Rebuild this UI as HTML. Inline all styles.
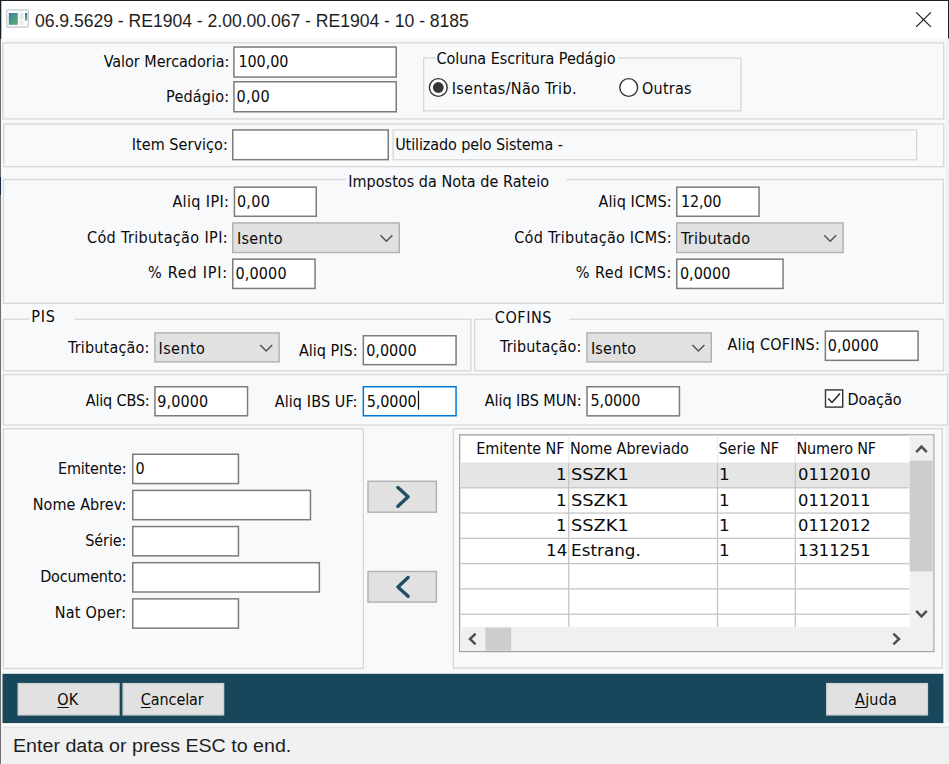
<!DOCTYPE html><html lang="pt-BR"><head><meta charset="utf-8"><title>RE1904</title><style>html,body{margin:0;padding:0}
body{width:949px;height:764px;position:relative;overflow:hidden;background:#f1f1f1}
#w{position:absolute;left:0;top:0;width:949px;height:764px;overflow:hidden}
#w>svg{position:absolute;left:0;top:0}
#w .t{position:absolute;white-space:nowrap;line-height:24px;height:24px}
#w .t i{display:inline-block;width:0;height:0}
u{text-decoration:underline;text-underline-offset:1.5px;text-decoration-thickness:1px}</style></head><body><div id="w">
<svg width="949" height="764" viewBox="0 0 949 764">
<rect x="0" y="0" width="949" height="764" fill="#f1f1f1"/>
<rect x="1" y="1" width="947" height="37.7" fill="#fff"/>
<rect x="2" y="38.7" width="944" height="688.3" fill="#f8f9fb"/>
<rect x="0" y="0" width="949" height="1" fill="#16202a"/>
<rect x="0" y="0" width="1.2" height="764" fill="#6e6e6e"/>
<rect x="0" y="0" width="1.2" height="39" fill="#16202a"/>
<rect x="0" y="177" width="1.2" height="18" fill="#1c2c44"/>
<rect x="1.2" y="38.7" width="0.8" height="725.3" fill="#fdfdfd"/>
<rect x="948" y="0" width="1" height="38.5" fill="#16202a"/>
<rect x="2.85" y="42.85" width="940.9" height="76.1" fill="#f8f9fb" stroke="#d6d7d9" stroke-width="1.3"/>
<rect x="233.95" y="47.05" width="162.3" height="30" fill="#fff" stroke="#7c7c7c" stroke-width="1.5"/>
<rect x="233.95" y="81.75" width="162.3" height="30" fill="#fff" stroke="#7c7c7c" stroke-width="1.5"/>
<rect x="423.65" y="58.05" width="317.3" height="52.8" fill="#f8f9fb" stroke="#d6d7d9" stroke-width="1.3"/>
<rect x="435.6" y="56.9" width="182.9" height="2.3" fill="#f8f9fb"/>
<circle cx="438.3" cy="87.5" r="8.9" fill="#fff" stroke="#333" stroke-width="1.4"/>
<circle cx="438.3" cy="87.5" r="5.4" fill="#353535"/>
<circle cx="628.7" cy="87.5" r="8.9" fill="#fff" stroke="#333" stroke-width="1.4"/>
<rect x="3.75" y="124.05" width="940" height="42.6" fill="#f8f9fb" stroke="#d6d7d9" stroke-width="1.3"/>
<rect x="232.75" y="129.95" width="155.5" height="29.7" fill="#fff" stroke="#7c7c7c" stroke-width="1.5"/>
<rect x="393.15" y="129.95" width="523.5" height="29.8" fill="#f8f9fb" stroke="#d6d7d9" stroke-width="1.3"/>
<rect x="3.45" y="179.45" width="939.9" height="123.9" fill="#f8f9fb" stroke="#d6d7d9" stroke-width="1.3"/>
<rect x="346.5" y="178.3" width="220" height="2.3" fill="#f8f9fb"/>
<rect x="234.45" y="187.15" width="81.8" height="29.1" fill="#fff" stroke="#7c7c7c" stroke-width="1.5"/>
<rect x="232.7" y="222.9" width="166.6" height="29.6" fill="#e1e1e1" stroke="#b0b0b0" stroke-width="1.4"/>
<path d="M380.4 235.2 L386.4 241.2 L392.4 235.2" fill="none" stroke="#525252" stroke-width="1.45" />
<rect x="232.75" y="259.15" width="82.3" height="29.3" fill="#fff" stroke="#7c7c7c" stroke-width="1.5"/>
<rect x="676.75" y="187.15" width="82.3" height="29.1" fill="#fff" stroke="#7c7c7c" stroke-width="1.5"/>
<rect x="676.7" y="222.9" width="166.4" height="29.6" fill="#e1e1e1" stroke="#b0b0b0" stroke-width="1.4"/>
<path d="M824.2 235.2 L830.2 241.2 L836.2 235.2" fill="none" stroke="#525252" stroke-width="1.45" />
<rect x="676.75" y="259.15" width="106.3" height="29.3" fill="#fff" stroke="#7c7c7c" stroke-width="1.5"/>
<rect x="3.45" y="319.25" width="467.4" height="51.5" fill="#f8f9fb" stroke="#d6d7d9" stroke-width="1.3"/>
<rect x="29" y="318.1" width="45.6" height="2.3" fill="#f8f9fb"/>
<rect x="474.65" y="319.25" width="468.9" height="51.5" fill="#f8f9fb" stroke="#d6d7d9" stroke-width="1.3"/>
<rect x="493" y="318.1" width="76.3" height="2.3" fill="#f8f9fb"/>
<rect x="154.9" y="332.9" width="124.2" height="29" fill="#e1e1e1" stroke="#b0b0b0" stroke-width="1.4"/>
<path d="M260.2 344.9 L266.2 350.9 L272.2 344.9" fill="none" stroke="#525252" stroke-width="1.45" />
<rect x="363.35" y="335.75" width="92.7" height="28.9" fill="#fff" stroke="#7c7c7c" stroke-width="1.5"/>
<rect x="587" y="332.9" width="124.3" height="29" fill="#e1e1e1" stroke="#b0b0b0" stroke-width="1.4"/>
<path d="M692.4 344.9 L698.4 350.9 L704.4 344.9" fill="none" stroke="#525252" stroke-width="1.45" />
<rect x="825.35" y="331.15" width="92.7" height="29.2" fill="#fff" stroke="#7c7c7c" stroke-width="1.5"/>
<rect x="3.45" y="374.55" width="944.1" height="50.5" fill="#f8f9fb" stroke="#d6d7d9" stroke-width="1.3"/>
<rect x="154.95" y="386.75" width="92.6" height="29" fill="#fff" stroke="#7c7c7c" stroke-width="1.5"/>
<rect x="363.35" y="386.75" width="92.7" height="29" fill="#fff" stroke="#0078d7" stroke-width="1.5"/>
<rect x="587.05" y="386.75" width="92.4" height="29.1" fill="#fff" stroke="#7c7c7c" stroke-width="1.5"/>
<rect x="417.9" y="390.8" width="1.2" height="18.8" fill="#111"/>
<rect x="825.5" y="389.9" width="17.2" height="17.2" fill="#fff" stroke="#333" stroke-width="1.4"/>
<path d="M828.3 398.6 L832 402.4 L840 393.6" fill="none" stroke="#222" stroke-width="1.5" />
<rect x="3.45" y="428.75" width="359.9" height="239.7" fill="#f8f9fb" stroke="#d6d7d9" stroke-width="1.3"/>
<rect x="132.75" y="454.25" width="105.7" height="29.3" fill="#fff" stroke="#7c7c7c" stroke-width="1.5"/>
<rect x="132.75" y="490.4" width="177.7" height="29.3" fill="#fff" stroke="#7c7c7c" stroke-width="1.5"/>
<rect x="132.75" y="526.55" width="105.7" height="29.3" fill="#fff" stroke="#7c7c7c" stroke-width="1.5"/>
<rect x="132.75" y="562.7" width="186.6" height="29.3" fill="#fff" stroke="#7c7c7c" stroke-width="1.5"/>
<rect x="132.75" y="598.85" width="105.7" height="29.3" fill="#fff" stroke="#7c7c7c" stroke-width="1.5"/>
<rect x="368" y="481.3" width="68.4" height="30.9" fill="#e1e1e1" stroke="#b0b0b0" stroke-width="1.4"/>
<path d="M397.9 487.45 L408.1 496.85 L397.9 506.25" fill="none" stroke="#1f4f64" stroke-width="3.4" stroke-linecap="round" stroke-linejoin="round"/>
<rect x="368" y="571.5" width="68.4" height="30.6" fill="#e1e1e1" stroke="#b0b0b0" stroke-width="1.4"/>
<path d="M408.1 577.5 L397.9 586.9 L408.1 596.3" fill="none" stroke="#1f4f64" stroke-width="3.4" stroke-linecap="round" stroke-linejoin="round"/>
<rect x="453.35" y="428.75" width="488.9" height="239.4" fill="#f8f9fb" stroke="#d6d7d9" stroke-width="1.3"/>
<rect x="459.65" y="434.85" width="474.2" height="216.7" fill="#fff" stroke="#a2a2a2" stroke-width="1.3"/>
<rect x="460.3" y="462.5" width="449.4" height="25.28" fill="#e5e5e5"/>
<rect x="460.3" y="487.13" width="449.4" height="1.3" fill="#c6c6c6"/>
<rect x="460.3" y="512.41" width="449.4" height="1.3" fill="#c6c6c6"/>
<rect x="460.3" y="537.69" width="449.4" height="1.3" fill="#c6c6c6"/>
<rect x="460.3" y="562.97" width="449.4" height="1.3" fill="#c6c6c6"/>
<rect x="460.3" y="588.25" width="449.4" height="1.3" fill="#c6c6c6"/>
<rect x="460.3" y="613.53" width="449.4" height="1.3" fill="#c6c6c6"/>
<rect x="568.05" y="462.5" width="1.3" height="164.3" fill="#c6c6c6"/>
<rect x="568.05" y="435.5" width="1.3" height="27" fill="#eeeeee"/>
<rect x="716.85" y="462.5" width="1.3" height="164.3" fill="#c6c6c6"/>
<rect x="716.85" y="435.5" width="1.3" height="27" fill="#eeeeee"/>
<rect x="794.65" y="462.5" width="1.3" height="164.3" fill="#c6c6c6"/>
<rect x="794.65" y="435.5" width="1.3" height="27" fill="#eeeeee"/>
<rect x="909.7" y="435.5" width="23.5" height="191.3" fill="#f0f0f0"/>
<rect x="909.7" y="460.6" width="22.9" height="110.8" fill="#cdcdcd"/>
<path d="M916.2 452.2 L921.5 446.6 L926.8 452.2" fill="none" stroke="#505050" stroke-width="2.5" />
<path d="M916.2 610.8 L921.5 616.4 L926.8 610.8" fill="none" stroke="#505050" stroke-width="2.5" />
<rect x="460.3" y="626.8" width="472.9" height="24.1" fill="#f0f0f0"/>
<rect x="485.4" y="627.6" width="25.8" height="23" fill="#cdcdcd"/>
<path d="M475.6 633.6 L470 639 L475.6 644.4" fill="none" stroke="#505050" stroke-width="2.5" />
<path d="M893.4 633.6 L899 639 L893.4 644.4" fill="none" stroke="#505050" stroke-width="2.5" />
<rect x="2.5" y="673.8" width="940.9" height="49.5" fill="#18475b"/>
<rect x="2" y="723.3" width="947" height="3.4" fill="#fbfbfb"/>
<rect x="2" y="726.7" width="947" height="1.1" fill="#dedede"/>
<rect x="2" y="727.8" width="947" height="36.2" fill="#f1f1f1"/>
<rect x="18.15" y="683.55" width="100.9" height="31.4" fill="#e1e1e1" stroke="#d0d0d0" stroke-width="1.3"/>
<rect x="123.05" y="683.55" width="100.6" height="31.4" fill="#e1e1e1" stroke="#d0d0d0" stroke-width="1.3"/>
<rect x="826.75" y="683.55" width="100.7" height="31.4" fill="#e1e1e1" stroke="#d0d0d0" stroke-width="1.3"/>
<defs><linearGradient id="g1" x1="0" y1="0" x2="1" y2="1"><stop offset="0" stop-color="#3f78a8"/><stop offset="0.5" stop-color="#4c9a86"/><stop offset="1" stop-color="#5fae6a"/></linearGradient>
<linearGradient id="g2" x1="0" y1="0" x2="0" y2="1"><stop offset="0" stop-color="#3f6fae"/><stop offset="1" stop-color="#6bb56a"/></linearGradient></defs>
<rect x="6.7" y="9.8" width="21.6" height="17.4" rx="1.6" fill="#fbfcfd" stroke="#c3c8ce" stroke-width="1.2"/>
<rect x="8.8" y="13" width="9" height="11.8" fill="url(#g1)"/>
<rect x="19.6" y="13" width="3.8" height="6.6" fill="#e6e8ea"/>
<rect x="19.6" y="21.2" width="3.8" height="3.5" fill="#e9ebec"/>
<rect x="25" y="13" width="2.2" height="7.5" fill="url(#g2)"/>
<path d="M916.2 12.4 L930.9 26.9 M930.9 12.4 L916.2 26.9" fill="none" stroke="#111" stroke-width="1.1" />
</svg>
<div class="t" style='left:34.90px;top:8.90px;font:17.6px "Liberation Sans",sans-serif;line-height:24px;color:#1e1e1e;letter-spacing:-0.024px'>06.9.5629 - RE1904 - 2.00.00.067 - RE1904 - 10 - 8185</div>
<div class="t" style='left:103.70px;top:50.00px;font:16px "DejaVu Sans Condensed","Liberation Sans",sans-serif;line-height:24px;color:#0a0a0a;letter-spacing:-0.013px'>Valor Mercadoria:</div>
<div class="t" style='left:166.10px;top:84.70px;font:16px "DejaVu Sans Condensed","Liberation Sans",sans-serif;line-height:24px;color:#0a0a0a;letter-spacing:0.183px'>Pedágio:</div>
<div class="t" style='left:238.40px;top:50.40px;font:16px "DejaVu Sans Condensed","Liberation Sans",sans-serif;line-height:24px;color:#0a0a0a;letter-spacing:-0.060px'>100,00</div>
<div class="t" style='left:236.60px;top:85.10px;font:16px "DejaVu Sans Condensed","Liberation Sans",sans-serif;line-height:24px;color:#0a0a0a;letter-spacing:0.313px'>0,00</div>
<div class="t" style='left:436.40px;top:47.20px;font:16px "DejaVu Sans Condensed","Liberation Sans",sans-serif;line-height:24px;color:#0a0a0a;letter-spacing:-0.032px'>Coluna Escritura Pedágio</div>
<div class="t" style='left:451.70px;top:76.70px;font:16px "DejaVu Sans Condensed","Liberation Sans",sans-serif;line-height:24px;color:#0a0a0a;letter-spacing:0.326px'>Isentas/Não Trib.</div>
<div class="t" style='left:642.00px;top:76.70px;font:16px "DejaVu Sans Condensed","Liberation Sans",sans-serif;line-height:24px;color:#0a0a0a;letter-spacing:0.229px'>Outras</div>
<div class="t" style='left:131.70px;top:133.10px;font:16px "DejaVu Sans Condensed","Liberation Sans",sans-serif;line-height:24px;color:#0a0a0a;letter-spacing:0.066px'>Item Serviço:</div>
<div class="t" style='left:395.20px;top:133.30px;font:16px "DejaVu Sans Condensed","Liberation Sans",sans-serif;line-height:24px;color:#0a0a0a;letter-spacing:-0.108px'>Utilizado pelo Sistema -</div>
<div class="t" style='left:348.20px;top:170.30px;font:16px "DejaVu Sans Condensed","Liberation Sans",sans-serif;line-height:24px;color:#0a0a0a;letter-spacing:0.046px'>Impostos da Nota de Rateio</div>
<div class="t" style='left:172.40px;top:189.80px;font:16px "DejaVu Sans Condensed","Liberation Sans",sans-serif;line-height:24px;color:#0a0a0a;letter-spacing:0.369px'>Aliq IPI:</div>
<div class="t" style='left:236.90px;top:190.30px;font:16px "DejaVu Sans Condensed","Liberation Sans",sans-serif;line-height:24px;color:#0a0a0a;letter-spacing:0.313px'>0,00</div>
<div class="t" style='left:87.00px;top:225.70px;font:16px "DejaVu Sans Condensed","Liberation Sans",sans-serif;line-height:24px;color:#0a0a0a;letter-spacing:0.380px'>Cód Tributação IPI:</div>
<div class="t" style='left:236.90px;top:227.00px;font:16px "DejaVu Sans Condensed","Liberation Sans",sans-serif;line-height:24px;color:#0a0a0a;letter-spacing:0.305px'>Isento</div>
<div class="t" style='left:147.90px;top:261.40px;font:16px "DejaVu Sans Condensed","Liberation Sans",sans-serif;line-height:24px;color:#0a0a0a;letter-spacing:0.798px'>% Red IPI:</div>
<div class="t" style='left:235.60px;top:261.90px;font:16px "DejaVu Sans Condensed","Liberation Sans",sans-serif;line-height:24px;color:#0a0a0a;letter-spacing:0.123px'>0,0000</div>
<div class="t" style='left:598.50px;top:189.80px;font:16px "DejaVu Sans Condensed","Liberation Sans",sans-serif;line-height:24px;color:#0a0a0a;letter-spacing:0.103px'>Aliq ICMS:</div>
<div class="t" style='left:681.10px;top:190.20px;font:16px "DejaVu Sans Condensed","Liberation Sans",sans-serif;line-height:24px;color:#0a0a0a;letter-spacing:-0.201px'>12,00</div>
<div class="t" style='left:514.30px;top:225.70px;font:16px "DejaVu Sans Condensed","Liberation Sans",sans-serif;line-height:24px;color:#0a0a0a;letter-spacing:0.252px'>Cód Tributação ICMS:</div>
<div class="t" style='left:681.10px;top:226.70px;font:16px "DejaVu Sans Condensed","Liberation Sans",sans-serif;line-height:24px;color:#0a0a0a;letter-spacing:0.230px'>Tributado</div>
<div class="t" style='left:575.80px;top:261.40px;font:16px "DejaVu Sans Condensed","Liberation Sans",sans-serif;line-height:24px;color:#0a0a0a;letter-spacing:0.472px'>% Red ICMS:</div>
<div class="t" style='left:679.90px;top:262.00px;font:16px "DejaVu Sans Condensed","Liberation Sans",sans-serif;line-height:24px;color:#0a0a0a;letter-spacing:0.023px'>0,0000</div>
<div class="t" style='left:31.30px;top:305.00px;font:16px "DejaVu Sans Condensed","Liberation Sans",sans-serif;line-height:24px;color:#0a0a0a;letter-spacing:0.712px'>PIS</div>
<div class="t" style='left:68.00px;top:335.70px;font:16px "DejaVu Sans Condensed","Liberation Sans",sans-serif;line-height:24px;color:#0a0a0a;letter-spacing:0.194px'>Tributação:</div>
<div class="t" style='left:158.50px;top:336.70px;font:16px "DejaVu Sans Condensed","Liberation Sans",sans-serif;line-height:24px;color:#0a0a0a;letter-spacing:0.438px'>Isento</div>
<div class="t" style='left:298.90px;top:338.50px;font:16px "DejaVu Sans Condensed","Liberation Sans",sans-serif;line-height:24px;color:#0a0a0a;letter-spacing:0.026px'>Aliq PIS:</div>
<div class="t" style='left:366.20px;top:338.70px;font:16px "DejaVu Sans Condensed","Liberation Sans",sans-serif;line-height:24px;color:#0a0a0a;letter-spacing:0.007px'>0,0000</div>
<div class="t" style='left:494.80px;top:305.50px;font:16px "DejaVu Sans Condensed","Liberation Sans",sans-serif;line-height:24px;color:#0a0a0a;letter-spacing:0.581px'>COFINS</div>
<div class="t" style='left:500.00px;top:335.30px;font:16px "DejaVu Sans Condensed","Liberation Sans",sans-serif;line-height:24px;color:#0a0a0a;letter-spacing:0.194px'>Tributação:</div>
<div class="t" style='left:590.90px;top:336.50px;font:16px "DejaVu Sans Condensed","Liberation Sans",sans-serif;line-height:24px;color:#0a0a0a;letter-spacing:0.221px'>Isento</div>
<div class="t" style='left:727.40px;top:333.40px;font:16px "DejaVu Sans Condensed","Liberation Sans",sans-serif;line-height:24px;color:#0a0a0a;letter-spacing:0.198px'>Aliq COFINS:</div>
<div class="t" style='left:827.80px;top:334.00px;font:16px "DejaVu Sans Condensed","Liberation Sans",sans-serif;line-height:24px;color:#0a0a0a;letter-spacing:0.090px'>0,0000</div>
<div class="t" style='left:85.70px;top:389.30px;font:16px "DejaVu Sans Condensed","Liberation Sans",sans-serif;line-height:24px;color:#0a0a0a;letter-spacing:-0.145px'>Aliq CBS:</div>
<div class="t" style='left:157.20px;top:389.50px;font:16px "DejaVu Sans Condensed","Liberation Sans",sans-serif;line-height:24px;color:#0a0a0a;letter-spacing:0.123px'>9,0000</div>
<div class="t" style='left:274.70px;top:389.50px;font:16px "DejaVu Sans Condensed","Liberation Sans",sans-serif;line-height:24px;color:#0a0a0a;letter-spacing:0.114px'>Aliq IBS UF:</div>
<div class="t" style='left:366.70px;top:389.50px;font:16px "DejaVu Sans Condensed","Liberation Sans",sans-serif;line-height:24px;color:#0a0a0a;letter-spacing:-0.077px'>5,0000</div>
<div class="t" style='left:484.80px;top:389.00px;font:16px "DejaVu Sans Condensed","Liberation Sans",sans-serif;line-height:24px;color:#0a0a0a;letter-spacing:-0.068px'>Aliq IBS MUN:</div>
<div class="t" style='left:590.40px;top:389.30px;font:16px "DejaVu Sans Condensed","Liberation Sans",sans-serif;line-height:24px;color:#0a0a0a;letter-spacing:-0.077px'>5,0000</div>
<div class="t" style='left:847.50px;top:388.00px;font:16px "DejaVu Sans Condensed","Liberation Sans",sans-serif;line-height:24px;color:#0a0a0a;letter-spacing:-0.058px'>Doação</div>
<div class="t" style='left:58.10px;top:456.90px;font:16px "DejaVu Sans Condensed","Liberation Sans",sans-serif;line-height:24px;color:#0a0a0a;letter-spacing:-0.199px'>Emitente:</div>
<div class="t" style='left:135.42px;top:457.00px;font:16px "DejaVu Sans Condensed","Liberation Sans",sans-serif;line-height:24px;color:#0a0a0a'>0</div>
<div class="t" style='left:32.80px;top:492.80px;font:16px "DejaVu Sans Condensed","Liberation Sans",sans-serif;line-height:24px;color:#0a0a0a;letter-spacing:0.062px'>Nome Abrev:</div>
<div class="t" style='left:85.20px;top:528.70px;font:16px "DejaVu Sans Condensed","Liberation Sans",sans-serif;line-height:24px;color:#0a0a0a;letter-spacing:-0.071px'>Série:</div>
<div class="t" style='left:40.20px;top:565.20px;font:16px "DejaVu Sans Condensed","Liberation Sans",sans-serif;line-height:24px;color:#0a0a0a;letter-spacing:-0.203px'>Documento:</div>
<div class="t" style='left:54.80px;top:600.90px;font:16px "DejaVu Sans Condensed","Liberation Sans",sans-serif;line-height:24px;color:#0a0a0a;letter-spacing:0.221px'>Nat Oper:</div>
<div class="t" style='left:476.30px;top:437.00px;font:16px "DejaVu Sans Condensed","Liberation Sans",sans-serif;line-height:24px;color:#0a0a0a;letter-spacing:-0.060px'>Emitente NF</div>
<div class="t" style='left:569.90px;top:437.00px;font:16px "DejaVu Sans Condensed","Liberation Sans",sans-serif;line-height:24px;color:#0a0a0a;letter-spacing:-0.058px'>Nome Abreviado</div>
<div class="t" style='left:718.40px;top:437.00px;font:16px "DejaVu Sans Condensed","Liberation Sans",sans-serif;line-height:24px;color:#0a0a0a;letter-spacing:0.039px'>Serie NF</div>
<div class="t" style='left:796.50px;top:437.00px;font:16px "DejaVu Sans Condensed","Liberation Sans",sans-serif;line-height:24px;color:#0a0a0a;letter-spacing:-0.141px'>Numero NF</div>
<div class="t" style='left:556.03px;top:463.20px;font:15.2px "DejaVu Sans","Liberation Sans",sans-serif;line-height:24px;color:#0a0a0a;transform:scaleX(1.1000);transform-origin:0 0'>1</div>
<div class="t" style='left:570.90px;top:463.20px;font:15.2px "DejaVu Sans","Liberation Sans",sans-serif;line-height:24px;color:#0a0a0a;transform:scaleX(1.1721);transform-origin:0 0'>SSZK1</div>
<div class="t" style='left:719.48px;top:463.20px;font:15.2px "DejaVu Sans","Liberation Sans",sans-serif;line-height:24px;color:#0a0a0a;transform:scaleX(1.1000);transform-origin:0 0'>1</div>
<div class="t" style='left:797.80px;top:463.20px;font:15.2px "DejaVu Sans","Liberation Sans",sans-serif;line-height:24px;color:#0a0a0a;transform:scaleX(1.0748);transform-origin:0 0'>0112010</div>
<div class="t" style='left:556.03px;top:488.50px;font:15.2px "DejaVu Sans","Liberation Sans",sans-serif;line-height:24px;color:#0a0a0a;transform:scaleX(1.1000);transform-origin:0 0'>1</div>
<div class="t" style='left:570.90px;top:488.50px;font:15.2px "DejaVu Sans","Liberation Sans",sans-serif;line-height:24px;color:#0a0a0a;transform:scaleX(1.1721);transform-origin:0 0'>SSZK1</div>
<div class="t" style='left:719.48px;top:488.50px;font:15.2px "DejaVu Sans","Liberation Sans",sans-serif;line-height:24px;color:#0a0a0a;transform:scaleX(1.1000);transform-origin:0 0'>1</div>
<div class="t" style='left:797.80px;top:488.50px;font:15.2px "DejaVu Sans","Liberation Sans",sans-serif;line-height:24px;color:#0a0a0a;transform:scaleX(1.0748);transform-origin:0 0'>0112011</div>
<div class="t" style='left:556.03px;top:513.80px;font:15.2px "DejaVu Sans","Liberation Sans",sans-serif;line-height:24px;color:#0a0a0a;transform:scaleX(1.1000);transform-origin:0 0'>1</div>
<div class="t" style='left:570.90px;top:513.80px;font:15.2px "DejaVu Sans","Liberation Sans",sans-serif;line-height:24px;color:#0a0a0a;transform:scaleX(1.1721);transform-origin:0 0'>SSZK1</div>
<div class="t" style='left:719.48px;top:513.80px;font:15.2px "DejaVu Sans","Liberation Sans",sans-serif;line-height:24px;color:#0a0a0a;transform:scaleX(1.1000);transform-origin:0 0'>1</div>
<div class="t" style='left:797.80px;top:513.80px;font:15.2px "DejaVu Sans","Liberation Sans",sans-serif;line-height:24px;color:#0a0a0a;transform:scaleX(1.0748);transform-origin:0 0'>0112012</div>
<div class="t" style='left:545.77px;top:539.10px;font:15.2px "DejaVu Sans","Liberation Sans",sans-serif;line-height:24px;color:#0a0a0a;transform:scaleX(1.1000);transform-origin:0 0'>14</div>
<div class="t" style='left:571.20px;top:539.10px;font:15.2px "DejaVu Sans","Liberation Sans",sans-serif;line-height:24px;color:#0a0a0a;transform:scaleX(1.1076);transform-origin:0 0'>Estrang.</div>
<div class="t" style='left:719.48px;top:539.10px;font:15.2px "DejaVu Sans","Liberation Sans",sans-serif;line-height:24px;color:#0a0a0a;transform:scaleX(1.1000);transform-origin:0 0'>1</div>
<div class="t" style='left:797.80px;top:539.10px;font:15.2px "DejaVu Sans","Liberation Sans",sans-serif;line-height:24px;color:#0a0a0a;transform:scaleX(1.0748);transform-origin:0 0'>1311251</div>
<div class="t" style='left:57.37px;top:687.80px;font:16px "DejaVu Sans Condensed","Liberation Sans",sans-serif;line-height:24px;color:#0a0a0a'><u>O</u>K</div>
<div class="t" style='left:140.80px;top:687.80px;font:16px "DejaVu Sans Condensed","Liberation Sans",sans-serif;line-height:24px;color:#0a0a0a;letter-spacing:-0.077px'><u>C</u>ancelar</div>
<div class="t" style='left:855.10px;top:688.00px;font:16px "DejaVu Sans Condensed","Liberation Sans",sans-serif;line-height:24px;color:#0a0a0a;letter-spacing:0.193px'><u>A</u>juda</div>
<div class="t" style='left:12.70px;top:733.50px;font:18.8px "Liberation Sans",sans-serif;line-height:24px;color:#1e1e1e;transform:scaleX(1.0454);transform-origin:0 0'>Enter data or press ESC to end.</div>
</div></body></html>
